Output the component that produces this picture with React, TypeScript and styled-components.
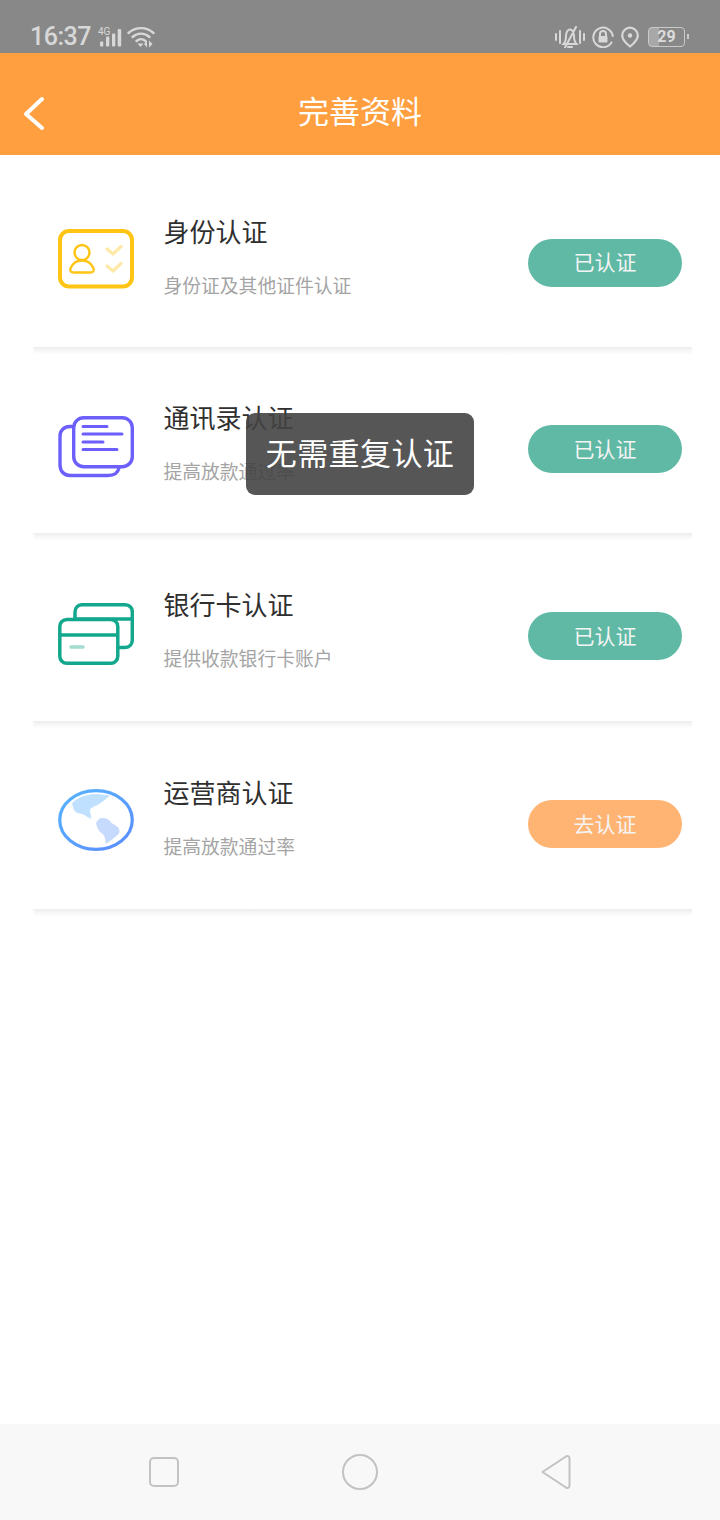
import styled, { createGlobalStyle } from "styled-components";

const GlobalStyle = createGlobalStyle`
  html, body { margin: 0; padding: 0; background: #fff; }
  body { font-family: Roboto, "Noto Sans CJK SC", sans-serif; }
  svg { display: block; }
`;

const Page = styled.div`
  position: relative;
  width: 720px;
  height: 1520px;
  display: flex;
  flex-direction: column;
  overflow: hidden;
  background: #fff;
`;

const StatusBar = styled.div`
  height: 53px;
  flex: none;
  background: #888888;
  display: flex;
  align-items: center;
  justify-content: space-between;
  padding: 21px 33px 0 30px;
  box-sizing: border-box;
  color: #d8d8d8;
`;

const StatusGroup = styled.div`
  display: flex;
  align-items: center;
  gap: 7px;
`;

const Clock = styled.span`
  font-family: Roboto, sans-serif;
  font-size: 25px;
  font-weight: 500;
  letter-spacing: -0.5px;
  line-height: 30px;
`;

const Battery = styled.div`
  position: relative;
  width: 37px;
  height: 20px;
  box-sizing: border-box;
  border: 1.5px solid #c9c9c9;
  border-radius: 4px;
  margin-left: 2px;
  margin-right: 2px;
  display: flex;
  align-items: center;
  justify-content: center;
  font: 700 16px/16px Roboto, sans-serif;
  color: #dcdcdc;
  background: linear-gradient(90deg, #a8a8a8 0 10px, transparent 10px);
  &::after {
    content: "";
    position: absolute;
    right: -5px;
    top: 6px;
    width: 2px;
    height: 5px;
    background: #c9c9c9;
  }
`;

const Header = styled.header`
  position: relative;
  height: 102px;
  flex: none;
  box-sizing: border-box;
  padding-top: 12px;
  background: #ff9f40;
  display: flex;
  align-items: center;
  justify-content: center;
`;

const BackButton = styled.button`
  position: absolute;
  left: 21px;
  top: 42px;
  padding: 0;
  border: 0;
  background: none;
  display: flex;
`;

const HeaderTitle = styled.h1`
  margin: 0;
  font: 400 31px/40px "Noto Sans CJK SC", sans-serif;
  color: #fff;
`;

const List = styled.div`
  flex: 1;
  padding-left: 32px;
  padding-right: 28px;
`;

const Row = styled.div<{ $height: number }>`
  position: relative;
  height: ${(p) => p.$height}px;
  box-sizing: border-box;
  display: flex;
  align-items: center;
  &:first-child {
    padding-top: 6px;
  }
  &::after {
    content: "";
    position: absolute;
    left: 0;
    right: 0;
    top: calc(100% - 1px);
    height: 8px;
    background: linear-gradient(180deg, #ececec, #f6f6f6 40%, #ffffff);
    mask-image: linear-gradient(90deg, transparent, #000 3px);
  }
`;

const IconSlot = styled.div<{ $drop: number }>`
  width: 131.5px;
  flex: none;
  padding-left: 26px;
  box-sizing: border-box;
  margin-top: ${(p) => p.$drop}px;
`;

const TextBlock = styled.div`
  flex: 1;
  display: flex;
  flex-direction: column;
  gap: 22px;
  margin-top: 2px;
`;

const Title = styled.div`
  font: 400 26px/36px "Noto Sans CJK SC", sans-serif;
  color: #2f2f2f;
`;

const Subtitle = styled.div`
  font: 400 18.8px/28px "Noto Sans CJK SC", sans-serif;
  color: #a4a4a4;
`;

const StatusPill = styled.div<{ $pending?: boolean }>`
  width: 154px;
  height: 48px;
  flex: none;
  margin: 16px 10px 0 0;
  border-radius: 24px;
  background: ${(p) => (p.$pending ? "#ffb474" : "#5fb9a5")};
  color: #f4f4f4;
  display: flex;
  align-items: center;
  justify-content: center;
  font: 400 21px/28px "Noto Sans CJK SC", sans-serif;
  padding-bottom: 3px;
  box-sizing: border-box;
`;

const Toast = styled.div`
  position: absolute;
  left: 246px;
  top: 413px;
  width: 228px;
  height: 82px;
  box-sizing: border-box;
  padding-bottom: 4px;
  border-radius: 9px;
  background: rgba(68, 68, 68, 0.9);
  color: #fff;
  display: flex;
  align-items: center;
  justify-content: center;
  font: 400 31px/40px "Noto Sans CJK SC", sans-serif;
  letter-spacing: 0.4px;
`;

const NavBar = styled.nav`
  height: 96px;
  flex: none;
  background: #f8f8f8;
  display: flex;
  align-items: center;
  justify-content: center;
  gap: 163px;
`;

const IdIcon = () => (
  <svg width="76" height="60" viewBox="0 0 76 60" fill="none">
    <rect x="2" y="2" width="72" height="55.500" rx="9" stroke="#ffc414" strokeWidth="4" />
    <circle cx="24" cy="23.500" r="7.500" stroke="#ffc414" strokeWidth="2.400" />
    <path d="M16 43.500c-3 0-4.500-1.500-3.500-4 2-5 6-8 11.500-8s9.500 3 11.500 8c1 2.500-.5 4-3.500 4z" stroke="#ffc414" strokeWidth="2.400" />
    <path d="M49 20l6 5 8-7.500M49 37l6 5 8-7.500" stroke="#ffe9a8" strokeWidth="3.200" strokeLinecap="round" strokeLinejoin="round" />
  </svg>
);

const ContactsIcon = () => (
  <svg width="76" height="62" viewBox="0 0 76 62" fill="none" stroke="#6c5ffb" strokeLinecap="round">
    <path d="M14 10.500h-2C6 10.500 2 14.500 2 20v29c0 6 4 10.500 10 10.500h38c6 0 10-3 11-7.500" strokeWidth="3.400" />
    <rect x="15.700" y="1.700" width="58.600" height="49" rx="10" strokeWidth="3.400" />
    <path d="M25 10.500h24M25 18h39M25 26h20M25 33.500h34" strokeWidth="3" />
  </svg>
);

const CardsIcon = () => (
  <svg width="76" height="62" viewBox="0 0 76 62" fill="none" stroke="#13a88e" strokeWidth="3.500">
    <path d="M17 15V9c0-4.500 3-7.300 7.500-7.300h42C71 1.700 74.300 4.500 74.300 9v28c0 4.500-3.300 7.500-7.800 7.500H61M17 16h57" />
    <rect x="1.800" y="16.500" width="58" height="43.700" rx="7" />
    <path d="M2 32h58" />
    <path d="M13 44h12" stroke="#a3dcd1" strokeWidth="3.500" strokeLinecap="round" />
  </svg>
);

const GlobeIcon = () => (
  <svg width="76" height="62" viewBox="0 0 76 62">
    <defs>
      <linearGradient id="globe-ring" x1="0" y1="0" x2="1" y2="1">
        <stop offset="0" stopColor="#56b4ff" />
        <stop offset="1" stopColor="#5b8cff" />
      </linearGradient>
    </defs>
    <ellipse cx="38" cy="31" rx="36.300" ry="29.300" fill="#fff" stroke="url(#globe-ring)" strokeWidth="3.200" />
    <path d="M14 14.500C18 10 22 8 26 7c4-1.500 8-2 12-1.800 5 0 10 .5 14 1.500-4 3-8 6.500-12 9-4 2-8 3-8 6 0 3 2 6 1 8-3-1-5-3-8-4.500-4-1-6-1-8-3-2-2-2-5-3-7.700z" fill="#bfe0fe" />
    <path d="M38 34c1.500-3 3.500-5 6-5 3 0 5 .5 7 2 2 2 3 4 6 5 2.500 1.500 4.500 3 4.500 6 0 2-1 3.500-3 5-3.500 3-7 5.500-10.500 8-1-2.500-.5-5-1.500-7.500-1-2.500-4.500-4-6-6.500-1-2-2-4.500-2.500-7z" fill="#c6dafd" />
  </svg>
);

const rows = [
  { title: "身份认证", sub: "身份证及其他证件认证", height: 193, drop: 9, icon: <IdIcon /> },
  { title: "通讯录认证", sub: "提高放款通过率", height: 186, drop: 11, icon: <ContactsIcon /> },
  { title: "银行卡认证", sub: "提供收款银行卡账户", height: 188, drop: 11, icon: <CardsIcon /> },
  { title: "运营商认证", sub: "提高放款通过率", height: 188, drop: 7, icon: <GlobeIcon />, pending: true },
];

export default function App() {
  return (
    <Page>
      <GlobalStyle />
      <StatusBar>
        <StatusGroup>
          <Clock>16:37</Clock>
          <svg width="24" height="20" viewBox="0 0 24 20" fill="#d8d8d8">
            <text x="0" y="8" fontSize="10" fontFamily="Roboto, sans-serif">4G</text>
            <rect x="2" y="14.500" width="3.300" height="5" rx="1" />
            <rect x="8" y="9.500" width="3.300" height="10" rx="1" />
            <rect x="14" y="6.500" width="3.300" height="13" rx="1" />
            <rect x="19.700" y="2" width="3.500" height="17.500" rx="1" />
          </svg>
          <svg width="28" height="22" viewBox="0 0 28 22" fill="none" stroke="#d8d8d8" strokeWidth="2.400" strokeLinecap="round" style={{ marginLeft: -2 }}>
            <path d="M1.500 7c7-6.500 18-6.500 25 0M5.500 11c5-4.500 12-4.500 17 0M9.500 15c3-2.500 6-2.500 9 0" />
            <path d="M10.500 17.500h6l-3 3.500z" fill="#d8d8d8" stroke="none" />
            <path d="M20 14.500v7l-3-3.500zM22 14.500v7l3.500-3.500z" fill="#d8d8d8" stroke="none" />
          </svg>
        </StatusGroup>
        <StatusGroup>
          <svg width="30" height="22" viewBox="0 0 30 22" fill="none" stroke="#d8d8d8" strokeWidth="2" strokeLinecap="round">
            <path d="M1 8v6M5 5v12M25 5v12M29 8v6" />
            <path d="M8.500 18c2-2 2.500-4 2.500-8 0-4 2-6.500 4-6.500s4 2.500 4 6.500c0 4 .5 6 2.500 8zM13 21h4M10 21.500L21 1" />
          </svg>
          <svg width="22" height="22" viewBox="0 0 22 22" fill="none" stroke="#d8d8d8" strokeWidth="2" strokeLinecap="round">
            <path d="M19.500 16.500A9.800 9.800 0 1 1 20.800 10" />
            <path d="M8 10V8a3 3 0 0 1 6 0v2" />
            <rect x="6.500" y="10" width="9" height="6.500" rx="1" fill="#d8d8d8" stroke="none" />
          </svg>
          <svg width="18" height="22" viewBox="0 0 18 22" fill="none" stroke="#d8d8d8" strokeWidth="2.200">
            <path d="M9 20.500c-4.500-3.500-7.800-7-7.800-11a7.800 7.800 0 0 1 15.600 0c0 4-3.300 7.500-7.800 11z" />
            <circle cx="9" cy="9.500" r="2.200" fill="#d8d8d8" stroke="none" />
          </svg>
          <Battery>29</Battery>
        </StatusGroup>
      </StatusBar>

      <Header>
        <BackButton aria-label="back">
          <svg width="24" height="36" viewBox="0 0 24 36" fill="none" stroke="#fff" strokeWidth="4" strokeLinecap="round" strokeLinejoin="round">
            <path d="M21 4L5 19l16 14" />
          </svg>
        </BackButton>
        <HeaderTitle>完善资料</HeaderTitle>
      </Header>

      <List>
        {rows.map((r) => (
          <Row key={r.title} $height={r.height}>
            <IconSlot $drop={r.drop}>{r.icon}</IconSlot>
            <TextBlock>
              <Title>{r.title}</Title>
              <Subtitle>{r.sub}</Subtitle>
            </TextBlock>
            <StatusPill $pending={r.pending}>{r.pending ? "去认证" : "已认证"}</StatusPill>
          </Row>
        ))}
      </List>

      <NavBar>
        <svg width="30" height="30" viewBox="0 0 30 30" fill="none" stroke="#c2c2c2" strokeWidth="2">
          <rect x="1" y="1" width="28" height="28" rx="4" />
        </svg>
        <svg width="36" height="36" viewBox="0 0 36 36" fill="none" stroke="#c2c2c2" strokeWidth="2">
          <circle cx="18" cy="18" r="17" />
        </svg>
        <svg width="30" height="34" viewBox="0 0 30 34" fill="none" stroke="#c2c2c2" strokeWidth="2" strokeLinejoin="round">
          <path d="M1.500 17L25 1.500c2-1 3.500 0 3.500 2v27c0 2-1.500 3-3.500 2z" />
        </svg>
      </NavBar>

      <Toast>无需重复认证</Toast>
    </Page>
  );
}
